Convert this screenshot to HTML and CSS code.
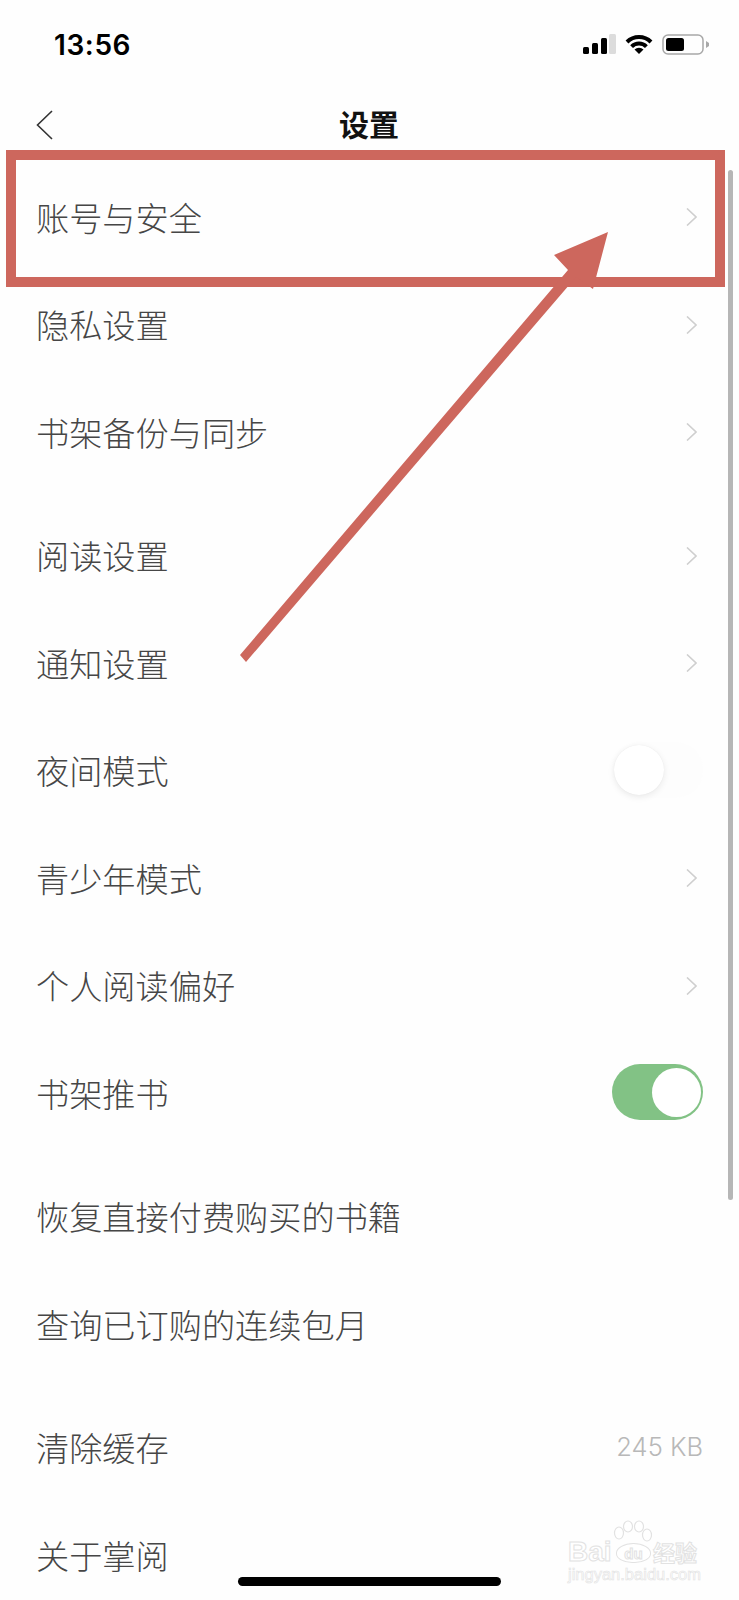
FILE: index.html
```html
<!DOCTYPE html>
<html lang="zh-CN">
<head>
    <meta charset="UTF-8">
    <meta name="viewport" content="width=device-width, initial-scale=1.0">
    <title>设置</title>
    <link rel="stylesheet" href="styles.css">
</head>
<body>
    <div class="screen">
        <div class="status">
            <span class="time">13:56</span>
            <div class="status-icons">
                <svg width="33" height="20" viewBox="0 0 33 20">
                    <rect x="0" y="13" width="6" height="7" rx="1.5" fill="#000"/>
                    <rect x="9" y="9" width="6" height="11" rx="1.5" fill="#000"/>
                    <rect x="18" y="4" width="6" height="16" rx="1.5" fill="#000"/>
                    <rect x="26" y="0" width="7" height="20" rx="1.5" fill="#dcdcdc"/>
                </svg>
                <svg width="28" height="20" viewBox="0 0 28 20" fill="none" stroke="#000" stroke-width="4">
                    <path d="M2 8A17 17 0 0 1 26 8"/>
                    <path d="M6.6 12.6A10.5 10.5 0 0 1 21.4 12.6"/>
                    <path d="M14 20L9.5 15.5A6.4 6.4 0 0 1 18.5 15.5Z" fill="#000" stroke="none"/>
                </svg>
                <svg width="47" height="21" viewBox="0 0 47 21">
                    <rect x="1" y="1" width="40" height="19" rx="5" fill="none" stroke="#a8a8a8" stroke-width="1.5"/>
                    <rect x="4" y="4" width="18" height="13" rx="2.5" fill="#000"/>
                    <path d="M44 7l3 2v3l-3 2z" fill="#a8a8a8"/>
                </svg>
            </div>
        </div>

        <div class="nav">
            <svg class="back" width="18" height="30" viewBox="0 0 18 30">
                <path d="M16 1L1.5 15 16 29" fill="none" stroke="#333" stroke-width="1.6"/>
            </svg>
            <h1 class="title">设置</h1>
        </div>

        <div class="group">
            <div class="row"><span>账号与安全</span><svg class="chev" width="11" height="18" viewBox="0 0 11 18"><path d="M1 0.5l9 8.5-9 8.5"/></svg></div>
            <div class="row"><span>隐私设置</span><svg class="chev" width="11" height="18" viewBox="0 0 11 18"><path d="M1 0.5l9 8.5-9 8.5"/></svg></div>
            <div class="row"><span>书架备份与同步</span><svg class="chev" width="11" height="18" viewBox="0 0 11 18"><path d="M1 0.5l9 8.5-9 8.5"/></svg></div>
        </div>

        <div class="group">
            <div class="row"><span>阅读设置</span><svg class="chev" width="11" height="18" viewBox="0 0 11 18"><path d="M1 0.5l9 8.5-9 8.5"/></svg></div>
            <div class="row"><span>通知设置</span><svg class="chev" width="11" height="18" viewBox="0 0 11 18"><path d="M1 0.5l9 8.5-9 8.5"/></svg></div>
            <div class="row"><span>夜间模式</span><div class="toggle"><div class="knob"></div></div></div>
            <div class="row"><span>青少年模式</span><svg class="chev" width="11" height="18" viewBox="0 0 11 18"><path d="M1 0.5l9 8.5-9 8.5"/></svg></div>
            <div class="row"><span>个人阅读偏好</span><svg class="chev" width="11" height="18" viewBox="0 0 11 18"><path d="M1 0.5l9 8.5-9 8.5"/></svg></div>
            <div class="row"><span>书架推书</span><div class="toggle on"><div class="knob"></div></div></div>
        </div>

        <div class="group">
            <div class="row"><span>恢复直接付费购买的书籍</span></div>
            <div class="row"><span>查询已订购的连续包月</span></div>
        </div>

        <div class="group">
            <div class="row"><span>清除缓存</span><span class="value">245 KB</span></div>
            <div class="row"><span>关于掌阅</span></div>
        </div>

        <div class="scrollbar"></div>
        <div class="home-bar"></div>

        <!-- red markup added on top of the screenshot -->
        <div class="mark-box"></div>
        <svg class="mark-arrow" width="739" height="700" viewBox="0 0 739 700">
            <polygon points="240,655 568,270 554,255 608,232 593,289 576,277 246,662" fill="#cd675d"/>
        </svg>

        <div class="watermark">
            <svg class="paw" width="40" height="26" viewBox="0 0 40 26" fill="#fff" stroke="#e2e2e2" stroke-width="1.2">
                <ellipse cx="6" cy="13" rx="4.5" ry="6"/>
                <ellipse cx="15" cy="6.5" rx="4.5" ry="5.5"/>
                <ellipse cx="26" cy="6.5" rx="4.5" ry="5.5"/>
                <ellipse cx="34" cy="15" rx="4.5" ry="6"/>
            </svg>
            <div class="wm-top">
                <span class="wm-bai">Bai</span>
                <span class="wm-du">du</span>
                <span class="wm-cn">经验</span>
            </div>
            <div class="wm-url">jingyan.baidu.com</div>
        </div>
    </div>
</body>
</html>
```

FILE: styles.css
```css
html, body {
    margin: 0;
    padding: 0;
    background: #fff;
}

.screen {
    position: relative;
    width: 739px;
    height: 1600px;
    overflow: hidden;
    background: #fefefe;
    font-family: "Noto Sans CJK SC", "Noto Sans", sans-serif;
    color: #464646;
}

.status {
    box-sizing: border-box;
    height: 88px;
    padding: 1px 30px 0 54px;
    display: flex;
    justify-content: space-between;
    align-items: center;
}

.time {
    font-family: Inter, "Liberation Sans", sans-serif;
    font-size: 28px;
    font-weight: 600;
    letter-spacing: 0.6px;
    color: #000;
}

.status-icons {
    display: flex;
    align-items: center;
    gap: 9px;
    margin-top: -1px;
}

.nav {
    height: 75.5px;
    padding-left: 36px;
    display: grid;
    grid-template-columns: 1fr auto 1fr;
    align-items: center;
}

.back {
    display: block;
    margin-bottom: 2px;
}

.title {
    grid-column: 2;
    margin: 0 37px 6px 0;
    font-size: 30px;
    font-weight: 700;
    color: #111;
}

.group {
    margin-bottom: 16px;
}

.row {
    height: 107.5px;
    padding: 0 36px;
    display: flex;
    justify-content: space-between;
    align-items: center;
    font-size: 33.2px;
    font-weight: 300;
}

.row > span {
    margin-bottom: 2px;
}

.chev {
    margin-right: 6px;
}

.chev path {
    fill: none;
    stroke: #cfcfcf;
    stroke-width: 1.6;
}

.value {
    font-family: Inter, "Noto Sans", sans-serif;
    font-size: 25.5px;
    font-weight: 300;
    color: #b8b8b8;
}

.toggle {
    position: relative;
    width: 91px;
    height: 56px;
    margin-bottom: 2px;
    border-radius: 28px;
    background: #fdfdfd;
}

.knob {
    position: absolute;
    top: 3px;
    left: 2px;
    width: 50px;
    height: 50px;
    border-radius: 50%;
    background: #fff;
    box-shadow: 0 2px 7px rgba(0, 0, 0, 0.08), 0 0 1px rgba(0, 0, 0, 0.08);
}

.toggle.on {
    background: #82c285;
}

.toggle.on .knob {
    left: 40px;
    width: 49px;
    height: 49px;
    top: 4px;
    box-shadow: none;
}

.scrollbar {
    position: absolute;
    top: 170px;
    left: 728px;
    width: 5px;
    height: 1030px;
    border-radius: 3px;
    background: #b6b6b6;
}

.home-bar {
    position: absolute;
    top: 1577px;
    left: 238px;
    width: 263px;
    height: 9px;
    border-radius: 5px;
    background: #000;
}

.mark-box {
    position: absolute;
    top: 150px;
    left: 6px;
    width: 719px;
    height: 137px;
    box-sizing: border-box;
    border: 10.5px solid #cd675d;
}

.mark-arrow {
    position: absolute;
    top: 0;
    left: 0;
}

.watermark {
    position: absolute;
    top: 1520px;
    left: 568px;
    width: 131px;
    padding-top: 19px;
    font-family: "Liberation Sans", sans-serif;
    color: #fff;
    -webkit-text-stroke: 1px #e2e2e2;
}

.paw {
    position: absolute;
    top: 0;
    left: 45px;
}

.wm-top {
    display: flex;
    align-items: center;
    height: 25px;
}

.wm-bai {
    width: 48px;
    font-size: 28px;
    font-weight: 700;
}

.wm-du {
    width: 35px;
    height: 20px;
    margin-top: 3px;
    border: 1.2px solid #e2e2e2;
    border-radius: 50% 50% 46% 46%;
    font-size: 15px;
    font-weight: 700;
    line-height: 20px;
    text-align: center;
    background: #fff;
    box-sizing: border-box;
}

.wm-cn {
    margin-left: 2px;
    font-family: "Noto Sans CJK SC", sans-serif;
    font-size: 22px;
    font-weight: 700;
    line-height: 25px;
}

.wm-url {
    margin-top: 1px;
    font-size: 16.5px;
    line-height: 19px;
    white-space: nowrap;
    -webkit-text-stroke: 0.6px #e2e2e2;
}
```
